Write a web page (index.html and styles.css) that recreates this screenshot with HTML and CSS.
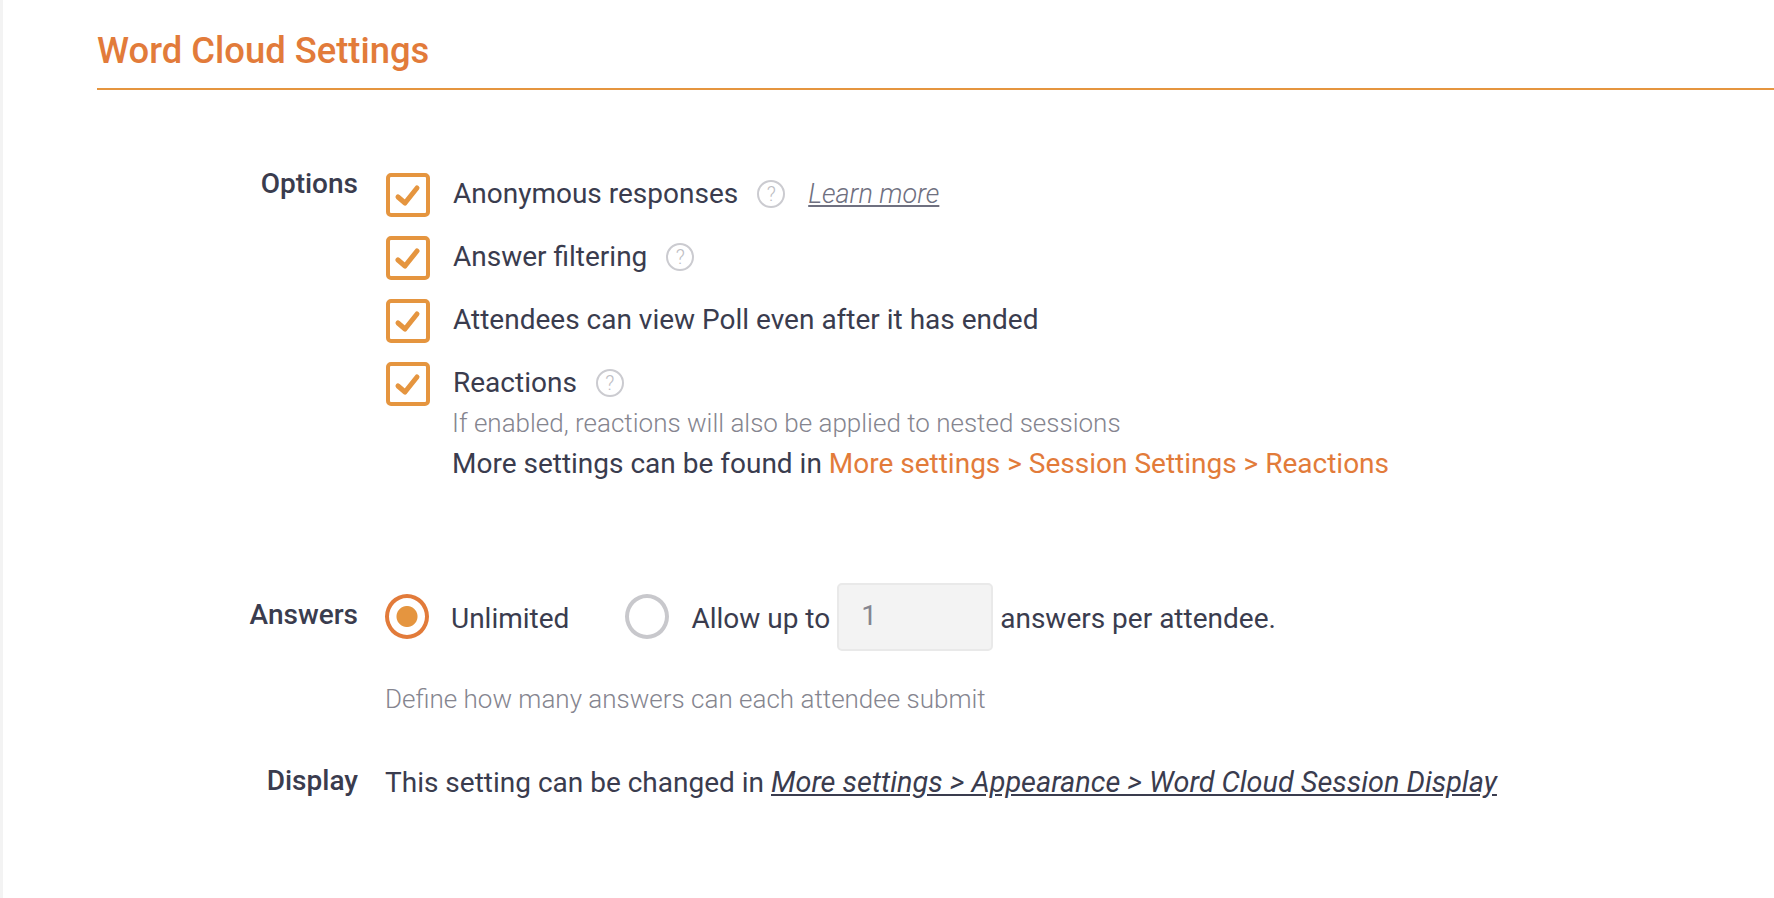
FILE: index.html
```html
<!DOCTYPE html>
<html lang="en">
<head>
    <meta charset="UTF-8">
    <meta name="viewport" content="width=device-width, initial-scale=1.0">
    <title>Word Cloud Settings</title>
    <link rel="stylesheet" href="styles.css">
</head>
<body>
    <div class="settings-page">
        <h1 class="page-title">Word Cloud Settings</h1>

        <div class="setting-row options-row">
            <div class="setting-label">Options</div>
            <div class="setting-body">
                <div class="check-row">
                    <span class="checkbox"><svg viewBox="0 0 44 44"><path d="M12 24l7 6 12-15"/></svg></span>
                    <span class="check-text">Anonymous responses</span>
                    <span class="help">?</span>
                    <a class="learn-more" href="#">Learn more</a>
                </div>
                <div class="check-row">
                    <span class="checkbox"><svg viewBox="0 0 44 44"><path d="M12 24l7 6 12-15"/></svg></span>
                    <span class="check-text">Answer filtering</span>
                    <span class="help">?</span>
                </div>
                <div class="check-row">
                    <span class="checkbox"><svg viewBox="0 0 44 44"><path d="M12 24l7 6 12-15"/></svg></span>
                    <span class="check-text">Attendees can view Poll even after it has ended</span>
                </div>
                <div class="check-row">
                    <span class="checkbox"><svg viewBox="0 0 44 44"><path d="M12 24l7 6 12-15"/></svg></span>
                    <span class="check-text">Reactions</span>
                    <span class="help">?</span>
                </div>
                <div class="check-extra">
                    <div class="hint">If enabled, reactions will also be applied to nested sessions</div>
                    <div class="more-line">More settings can be found in <a class="orange-link" href="#">More settings &gt; Session Settings &gt; Reactions</a></div>
                </div>
            </div>
        </div>

        <div class="setting-row answers-row">
            <div class="setting-label">Answers</div>
            <div class="setting-body">
                <div class="radio-row">
                    <span class="radio radio-on"></span>
                    <span class="radio-text">Unlimited</span>
                    <span class="radio radio-second"></span>
                    <span class="radio-text">Allow up to</span>
                    <span class="count-input">1</span>
                    <span class="radio-text radio-after">answers per attendee.</span>
                </div>
                <div class="hint answers-hint">Define how many answers can each attendee submit</div>
            </div>
        </div>

        <div class="setting-row display-row">
            <div class="setting-label">Display</div>
            <div class="setting-body">This setting can be changed in <a class="dark-link" href="#">More settings &gt; Appearance &gt; Word Cloud Session Display</a></div>
        </div>
    </div>
</body>
</html>
```

FILE: styles.css
```css
body {
    font-family: 'Roboto', sans-serif;
    margin: 0;
    height: 898px;
    overflow: hidden;
    background-color: #fff;
    border-left: 3px solid #f3f3f3;
    color: #3a3c4e;
    font-size: 28px;
}

.settings-page {
    padding-left: 94px;
}

.page-title {
    margin: 0;
    height: 88px;
    line-height: 101px;
    font-size: 36.4px;
    font-weight: 500;
    color: #e27b3a;
    border-bottom: 2px solid #e5953f;
    box-sizing: content-box;
}

.setting-row {
    display: flex;
}

.setting-label {
    width: 261px;
    flex-shrink: 0;
    text-align: right;
    font-weight: 500;
    margin-right: 27px;
}

.options-row {
    margin-top: 83px;
}

.options-row .setting-label {
    line-height: 38px;
    margin-top: -8px;
}

.check-row {
    display: flex;
    align-items: center;
    height: 44px;
    margin-bottom: 19px;
    padding-left: 1px;
}

.checkbox {
    width: 44px;
    height: 44px;
    box-sizing: border-box;
    border: 4px solid #e5953f;
    border-radius: 5px;
    margin-right: 23px;
}

.checkbox svg {
    display: block;
    width: 44px;
    height: 44px;
    margin: -4px;
}

.checkbox path {
    fill: none;
    stroke: #e5953f;
    stroke-width: 5;
    stroke-linecap: round;
    stroke-linejoin: round;
}

.check-text {
    margin-top: -4px;
}

.help {
    width: 24px;
    height: 24px;
    margin-left: 19px;
    margin-bottom: 2px;
    border: 2px solid #cbcbd0;
    border-radius: 50%;
    color: #bdbdc3;
    font-size: 20px;
    font-weight: 300;
    line-height: 24px;
    text-align: center;
}

.learn-more {
    margin-left: 23px;
    margin-bottom: 2px;
    color: #6f7080;
    font-size: 27px;
    font-style: italic;
    font-weight: 300;
    text-decoration: underline;
}

.check-extra {
    margin-top: -21px;
    padding-left: 67px;
}

.hint {
    color: #85858f;
    font-weight: 300;
    font-size: 26px;
}

.check-extra .hint {
    line-height: 38px;
}

.more-line {
    line-height: 44px;
}

.orange-link {
    color: #e27b3a;
    text-decoration: none;
}

.answers-row {
    margin-top: 104px;
}

.answers-row .setting-label {
    line-height: 38px;
    padding-top: 6px;
}

.radio-row {
    display: flex;
    align-items: center;
    height: 68px;
    margin-top: -7px;
    margin-left: -1px;
}

.radio {
    width: 44px;
    height: 45px;
    box-sizing: border-box;
    border: 4px solid #c8c8cc;
    border-radius: 50%;
    margin-left: 1px;
    margin-right: 22px;
    margin-bottom: 2px;
}

.radio-on {
    border-color: #e27b3a;
    background: radial-gradient(circle, #e5953f 10px, #fff 11px);
}

.radio-second {
    margin-left: 56px;
}

.radio-text {
    margin-top: 2px;
}

.count-input {
    width: 156px;
    height: 68px;
    box-sizing: border-box;
    margin-left: 7px;
    padding-left: 22px;
    background-color: #f3f3f3;
    border: 2px solid #e9e9e9;
    border-radius: 5px;
    color: #85858f;
    line-height: 62px;
}

.radio-after {
    margin-left: 7px;
}

.answers-hint {
    margin-top: 33px;
}

.display-row {
    margin-top: 49px;
    line-height: 38px;
}

.display-row .setting-label {
    margin-top: -1px;
}

.dark-link {
    color: #3a3c4e;
    font-size: 28.87px;
    font-style: italic;
    text-decoration: underline;
}
```
